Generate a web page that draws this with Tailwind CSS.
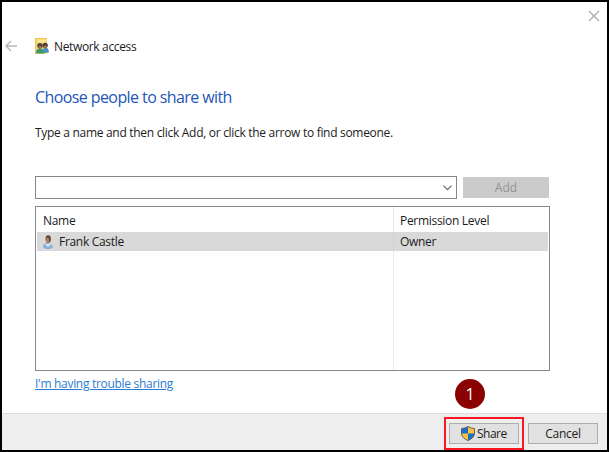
<!DOCTYPE html>
<html lang="en">
<head>
<meta charset="utf-8">
<title>Network access</title>
<script src="https://cdn.jsdelivr.net/npm/@tailwindcss/browser@4"></script>
</head>
<body class="overflow-hidden">
<main class="relative flex h-[452px] w-[609px] flex-col border-2 border-black bg-white font-['Open_Sans','Noto_Sans',sans-serif] text-[12px] leading-4 tracking-[-0.3px] text-[#1c1c1c]">
  <div class="flex h-7 shrink-0 items-center justify-end pr-[7px]">
    <svg class="size-3" viewBox="0 0 12 12" fill="none" stroke="#a3a3a3" stroke-width="1.1"><path d="M1 1l10 10M11 1L1 11"/></svg>
  </div>
  <header class="flex h-8 shrink-0 items-center pl-[3px]">
    <svg class="h-3 w-3" viewBox="0 0 12 12" fill="none" stroke="#b9b9b9" stroke-width="1.5"><path d="M12 6H1M6 1L1 6l5 5"/></svg>
    <svg class="ml-[18px] h-4 w-[14px]" viewBox="0 0 14 16">
      <path d="M0 0h12v16H0z" fill="#f6d66f"/><path d="M0 0h12v1H0zM0 0h1v16H0z" fill="#edc44e"/><path d="M3 1.500h8v3H3z" fill="#fbe496"/>
      <path d="M7.500 15q0-5.500 3-5.500t3.500 5z" fill="#4d8fc0"/><circle cx="10.200" cy="7.300" r="2.600" fill="#4a3c32"/><path d="M8.800 7.500h3v2.500h-3z" fill="#97704f"/>
      <path d="M1 15.500q0-5 4-5t4 5z" fill="#3b9875"/><circle cx="5" cy="7.800" r="2.700" fill="#4e4438"/><path d="M3.600 8h2.800v2.800H3.600z" fill="#a57a52"/>
    </svg>
    <h1 class="mt-[2px] ml-[5px] whitespace-nowrap tracking-[-0.35px]">Network access</h1>
  </header>
  <section class="flex h-[351px] shrink-0 flex-col pl-[33px]">
    <h2 class="mt-[23px] text-[16px] leading-6 tracking-[-0.59px] whitespace-nowrap text-[#2456b8]">Choose people to share with</h2>
    <p class="mt-[16px] whitespace-nowrap">Type a name and then click Add, or click the arrow to find someone.</p>
    <div class="mt-[35px] flex h-[23px] items-center gap-[6px]">
      <div class="flex h-[23px] w-[422px] items-center justify-end border border-[#858589] pr-1">
        <svg class="h-[6px] w-[9px]" viewBox="0 0 9 6" fill="none" stroke="#666" stroke-width="1.2"><path d="M.5 .7l4 4 4-4"/></svg>
      </div>
      <button class="h-[21px] w-[86px] bg-[#cbcbcb] pt-px tracking-normal text-[#929292]">Add</button>
    </div>
    <div class="mt-[7px] grid h-[165px] w-[515px] shrink-0 grid-cols-[357px_1fr] grid-rows-[25px_19px_1fr] border border-[#858991] px-px">
      <div class="flex items-center border-r border-[#e2e6eb] pt-[2px] pl-[6px]">Name</div>
      <div class="flex items-center pt-[2px] pl-[6px]">Permission Level</div>
      <div class="flex items-center border-r border-[#d0d5dc] bg-[#d9d9d9] pl-[6px]">
        <svg class="h-[14px] w-[10px]" viewBox="0 0 10 14"><path d="M0 12q0-4 4-4t6 4q-1 2-5 2t-5-2z" fill="#85b3da"/><path d="M2 9l3 3 3-3z" fill="#d8e9f5"/><ellipse cx="5.200" cy="4" rx="2.700" ry="3.700" fill="#5b4637"/><ellipse cx="4.500" cy="5.400" rx="1.600" ry="2.800" fill="#b58360"/></svg>
        <span class="mt-px ml-[6px]">Frank Castle</span>
      </div>
      <div class="flex items-center bg-[#d9d9d9] pt-px pl-[6px]">Owner</div>
      <div class="border-r border-[#e4edf6]"></div><div></div>
    </div>
    <a class="mt-[5px] self-start whitespace-nowrap text-[#2b7bd3] underline">I'm having trouble sharing</a>
  </section>
  <footer class="flex min-h-0 flex-1 items-start justify-end border-t border-[#dedede] bg-[#eee] pr-[9px]">
    <div class="mt-[3px] mr-[4px] flex h-[33px] w-20 shrink-0 items-center justify-center border-2 border-[#fb1720]">
      <button class="flex h-[21px] w-[70px] items-center border border-[#adadad] bg-[#e1e1e1] pl-[11px]">
        <svg class="h-[15px] w-[14px]" viewBox="0 0 14 15"><path d="M7 .5Q10 2.500 13.500 2.500V7q0 5-6.500 7.500Q.5 12 .5 7V2.500Q4 2.500 7 .5z" fill="#fdc23b"/><path d="M7 .5V7.500H.5v-5Q4 2.500 7 .5zM7 7.500h6.500Q13 12 7 14.500z" fill="#156fcb"/><path d="M7 .5Q10 2.500 13.500 2.500V7q0 5-6.500 7.500Q.5 12 .5 7V2.500Q4 2.500 7 .5z" fill="none" stroke="#62615b"/></svg>
        <span class="ml-[2px] tracking-[-0.5px]">Share</span>
      </button>
    </div>
    <button class="mt-[9px] h-[21px] w-[70px] shrink-0 border border-[#adadad] bg-[#e1e1e1]">Cancel</button>
  </footer>
  <div class="absolute top-[377px] left-[453px] flex size-[30px] items-center justify-center rounded-full bg-[#8b0000] text-[16px] font-medium text-white">1</div>
</main>
</body>
</html>
